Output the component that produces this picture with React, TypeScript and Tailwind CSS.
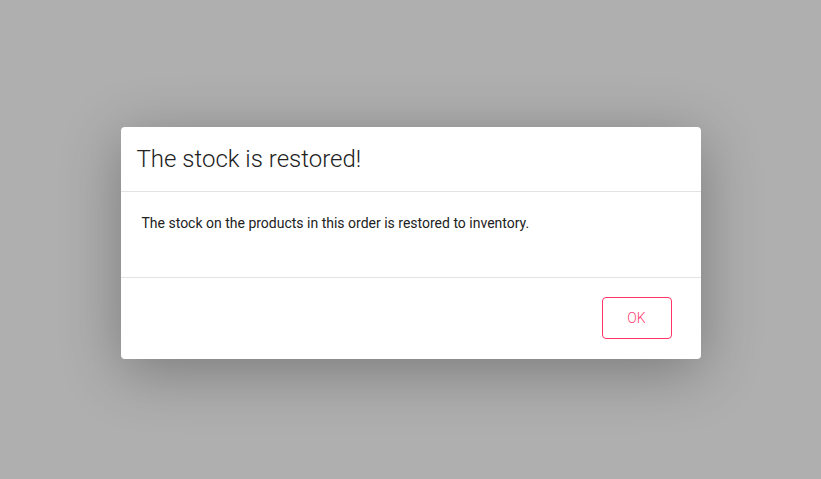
import React from 'react';

const App: React.FC = () => {
  return (
    <div className="min-h-[479px] bg-[#afafaf] pt-[127px]" style={{ fontFamily: 'Roboto, "Noto Sans", sans-serif' }}>
      {/* Dialog */}
      <div className="mx-auto w-[580px] bg-white rounded-[4px] shadow-[0_12px_60px_rgba(0,0,0,0.3)]">
        <div className="h-[65px] flex items-center px-4 border-b border-[#e3e3e3]">
          <h2 className="text-[24px] leading-8 font-light text-[#222] pb-[1px]">The stock is restored!</h2>
        </div>
        <div className="h-[86px] px-[21px] pt-[21px] border-b border-[#e3e3e3]">
          <p className="text-[14px] leading-5 text-[#222]">
            The stock on the products in this order is restored to inventory.
          </p>
        </div>
        <div className="h-[81px] flex justify-end items-start pt-[19px] pr-[29px]">
          <button className="w-[70px] h-[42px] rounded-[4px] border border-[#ff3366] text-[#ff3d71] text-[14px] font-light">
            OK
          </button>
        </div>
      </div>
    </div>
  );
};

export default App;
